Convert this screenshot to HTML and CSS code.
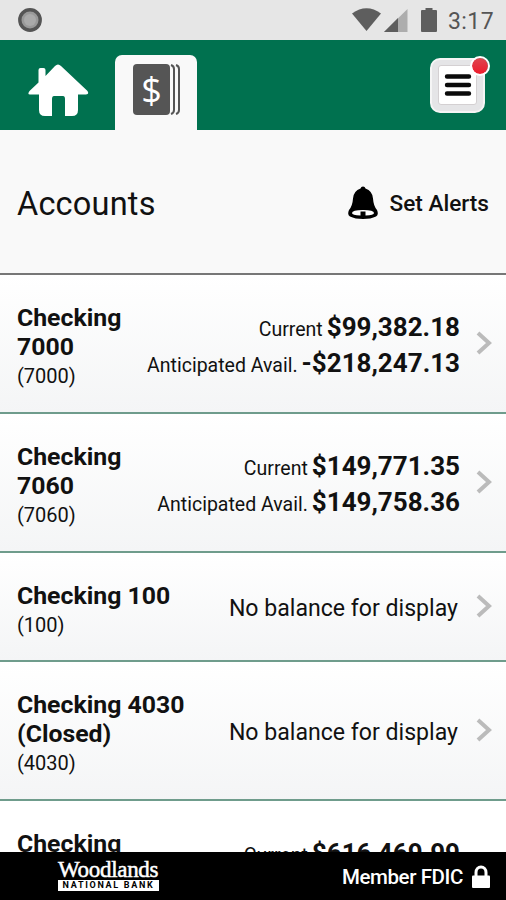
FILE: index.html
```html
<!DOCTYPE html>
<html lang="en">
<head>
  <meta charset="UTF-8">
  <title>Accounts</title>
  <meta name="viewport" content="width=device-width, initial-scale=1.0">
  <link rel="stylesheet" href="styles.css">
</head>
<body>

<div class="status-bar">
  <svg class="status-dot" width="24" height="24" viewBox="0 0 24 24">
    <circle cx="12" cy="12" r="10.2" fill="#999" stroke="#555" stroke-width="3.4"/>
    <circle cx="12" cy="12" r="6" fill="#aaa"/>
  </svg>
  <div class="status-icons">
    <svg width="80" height="26" viewBox="0 0 80 26">
      <path d="M0 6.500Q14.500-4 29 6.500L14.500 24Z" fill="#5e5e5e"/>
      <path d="M32 25L55.500 2V25Z" fill="#adadad"/>
      <path d="M32 25L46 11V25Z" fill="#5e5e5e"/>
    </svg>
    <svg class="battery" width="16" height="26" viewBox="0 0 16 26">
      <path d="M4.500 1h7v2h3.500q1 0 1 1v20q0 1-1 1H1q-1 0-1-1V4q0-1 1-1h3.500z" fill="#5e5e5e"/>
    </svg>
    <span class="clock">3:17</span>
  </div>
</div>

<header class="nav">
  <a class="home">
    <svg width="62" height="54" viewBox="0 0 62 54">
      <path d="M2.500 28L11.500 19.500V7q0-2 2-2h3q2 0 2 2v6L28 3q3-3 6 0L60.500 28q2 3.500-1.500 3.500H51V47q0 6-6 6H38V36q0-3-2-3H27q-2 0-2 3v17H18q-6 0-6-6V31.500H3q-3 0-.5-3.500z" fill="#fff"/>
    </svg>
  </a>
  <a class="tab">
    <svg width="48" height="52" viewBox="0 0 48 52">
      <rect x="0" y="0" width="37" height="51" rx="4" fill="#555"/>
      <path d="M38 1q3 1 3 4v41q0 3-3 4M43 1q3 1 3 4v41q0 3-3 4" fill="none" stroke="#555" stroke-width="2"/>
      <text class="dollar" x="18.500" y="38.500" text-anchor="middle">$</text>
    </svg>
  </a>
  <a class="menu">
    <span class="menu-inner">
      <svg width="28" height="24" viewBox="0 0 28 24">
        <path d="M3 3.500H25M3 12H25M3 20.500H25" stroke="#0a0a0a" stroke-width="4.400" stroke-linecap="round"/>
      </svg>
    </span>
    <span class="badge"></span>
  </a>
</header>

<div class="title">
  <h1>Accounts</h1>
  <a class="alerts">
    <svg width="30" height="34" viewBox="0 0 30 34">
      <path d="M15 0.500q2 0 2.500 2Q24.500 5 25 12.500q.5 7.500 4 11.500Q31 29 28 30.500 23 33 15 33T2 30.500Q-1 29 1 24 4.500 20 5 12.500 5.500 5 12.500 2.500q.5-2 2.500-2z" fill="#000"/>
      <path d="M4 27q0-3 11-3t11 3q0 2-8.500 2.500V25.500h-5v4Q4 29 4 27z" fill="#fff"/>
    </svg>
    <span>Set Alerts</span>
  </a>
</div>

<main class="accounts">
  <div class="row">
    <div class="name"><b>Checking<br>7000</b><small>(7000)</small></div>
    <div class="balance">
      <div><span>Current</span><b>$99,382.18</b></div>
      <div><span>Anticipated Avail.</span><b>-$218,247.13</b></div>
    </div>
    <svg class="arrow" width="16" height="24" viewBox="0 0 16 24"><path d="M2 2L13 12L2 22" fill="none" stroke="#bbb" stroke-width="4"/></svg>
  </div>
  <div class="row">
    <div class="name"><b>Checking<br>7060</b><small>(7060)</small></div>
    <div class="balance">
      <div><span>Current</span><b>$149,771.35</b></div>
      <div><span>Anticipated Avail.</span><b>$149,758.36</b></div>
    </div>
    <svg class="arrow" width="16" height="24" viewBox="0 0 16 24"><path d="M2 2L13 12L2 22" fill="none" stroke="#bbb" stroke-width="4"/></svg>
  </div>
  <div class="row short">
    <div class="name"><b>Checking 100</b><small>(100)</small></div>
    <div class="empty">No balance for display</div>
    <svg class="arrow" width="16" height="24" viewBox="0 0 16 24"><path d="M2 2L13 12L2 22" fill="none" stroke="#bbb" stroke-width="4"/></svg>
  </div>
  <div class="row">
    <div class="name"><b>Checking 4030<br>(Closed)</b><small>(4030)</small></div>
    <div class="empty">No balance for display</div>
    <svg class="arrow" width="16" height="24" viewBox="0 0 16 24"><path d="M2 2L13 12L2 22" fill="none" stroke="#bbb" stroke-width="4"/></svg>
  </div>
  <div class="row">
    <div class="name"><b>Checking</b></div>
    <div class="balance">
      <div><span>Current</span><b>$616,469.99</b></div>
    </div>
    <span class="arrow-space"></span>
  </div>
</main>

<footer class="footer">
  <div class="logo">
    <span class="logo-name">Woodlands</span>
    <span class="logo-sub">NATIONAL BANK</span>
  </div>
  <div class="fdic">
    <span>Member FDIC</span>
    <svg width="18" height="24" viewBox="0 0 18 24">
      <path d="M4 12V7.500a5 5.500 0 0 1 10 0V12" fill="none" stroke="#fff" stroke-width="3"/>
      <rect x="0" y="10.500" width="18" height="12.500" rx="1" fill="#fff"/>
    </svg>
  </div>
</footer>

</body>
</html>
```
FILE: styles.css
```css
* {
  box-sizing: border-box;
}
body {
  margin: 0;
  height: 900px;
  display: flex;
  flex-direction: column;
  overflow: hidden;
  background: #fff;
  color: #111;
  font-family: Roboto, sans-serif;
  white-space: nowrap;
}
svg {
  display: block;
  flex: none;
}
.status-bar {
  flex: none;
  height: 40px;
  display: flex;
  justify-content: space-between;
  padding: 0 12px 0 18px;
  background: #e6e6e6;
}
.status-dot {
  margin-top: 8px;
}
.status-icons {
  display: flex;
  padding-top: 7px;
}
.battery {
  margin-left: -11px;
}
.clock {
  margin-left: 11px;
  font-size: 23px;
  line-height: 29px;
  letter-spacing: 0.4px;
  color: #555;
}
.nav {
  flex: none;
  height: 90px;
  display: flex;
  align-items: flex-start;
  padding: 15px 21px 0 27px;
  background: #00714f;
}
.home {
  margin-top: 8px;
}
.tab {
  width: 82px;
  height: 75px;
  margin-left: 26px;
  padding: 9px 0 0 18px;
  background: #f9f9f9;
  border-radius: 7px 7px 0 0;
}
.dollar {
  font-family: "Open Sans", sans-serif;
  font-size: 36px;
  fill: #fff;
}
.menu {
  position: relative;
  width: 55px;
  height: 55px;
  margin: 3px 0 0 auto;
  padding: 5px 6px 6px;
  background: #e5e5e7;
  border: 2px solid #f5f5f5;
  border-radius: 10px;
}
.menu-inner {
  display: flex;
  align-items: center;
  justify-content: center;
  height: 100%;
  background: #fff;
  border: 1px solid #d4d0d2;
  border-radius: 3px;
}
.badge {
  position: absolute;
  top: -4px;
  right: -7px;
  width: 20px;
  height: 20px;
  background: linear-gradient(#dd4650, #ee1c2c);
  background-clip: padding-box;
  border: 2px solid #fff;
  border-radius: 50%;
}
.title {
  flex: none;
  height: 145px;
  display: flex;
  align-items: center;
  justify-content: space-between;
  padding: 3px 17px 0 17px;
  background: #f9f9f9;
  border-bottom: 2px solid #777;
}
.title h1 {
  margin: 0;
  padding-top: 2px;
  font-size: 32.5px;
  font-weight: 400;
  letter-spacing: 0.2px;
}
.alerts {
  display: flex;
  align-items: center;
  gap: 12px;
  font-size: 22.6px;
  font-weight: 500;
}
.accounts {
  flex: 1;
  min-height: 0;
  overflow: hidden;
}
.row {
  height: 139px;
  display: flex;
  align-items: flex-start;
  padding: 28px 14px 0 17px;
  background: linear-gradient(#fff, #f4f5f6);
  border-bottom: 2px solid #6f9c8c;
}
.row.short {
  height: 109px;
}
.row:last-child {
  background: #fff;
}
.name b {
  display: block;
  font-size: 24.8px;
  font-weight: 700;
  line-height: 29px;
}
.name small {
  display: block;
  padding-top: 1px;
  font-size: 20px;
  line-height: 29px;
}
.balance {
  flex: 1;
  padding-top: 6px;
  font-size: 19.5px;
  line-height: 36px;
}
.balance div {
  height: 36px;
  display: flex;
  align-items: baseline;
  justify-content: flex-end;
  gap: 4px;
}
.balance b {
  font-size: 26px;
  font-weight: 700;
}
.empty {
  flex: 1;
  align-self: center;
  padding-right: 2px;
  margin-top: -24px;
  text-align: right;
  font-size: 23.1px;
}
.arrow {
  align-self: center;
  margin: -30px 0 0 16px;
}
.arrow-space {
  width: 32px;
}
.footer {
  flex: none;
  height: 48px;
  display: flex;
  justify-content: space-between;
  padding: 0 16px 0 58px;
  background: #000;
  color: #fff;
}
.logo {
  width: 101px;
  padding-top: 7px;
}
.logo-name {
  display: block;
  font-family: "Liberation Serif", serif;
  font-size: 23px;
  line-height: 21px;
  letter-spacing: -0.3px;
  -webkit-text-stroke: 0.5px #fff;
}
.logo-sub {
  display: block;
  height: 11px;
  background: #fff;
  color: #000;
  font-size: 9px;
  font-weight: 700;
  line-height: 11px;
  letter-spacing: 1.7px;
  text-align: center;
}
.fdic {
  display: flex;
  align-items: center;
  gap: 9px;
  padding-top: 1px;
  font-size: 20.5px;
  font-weight: 500;
  letter-spacing: -0.4px;
}
```
